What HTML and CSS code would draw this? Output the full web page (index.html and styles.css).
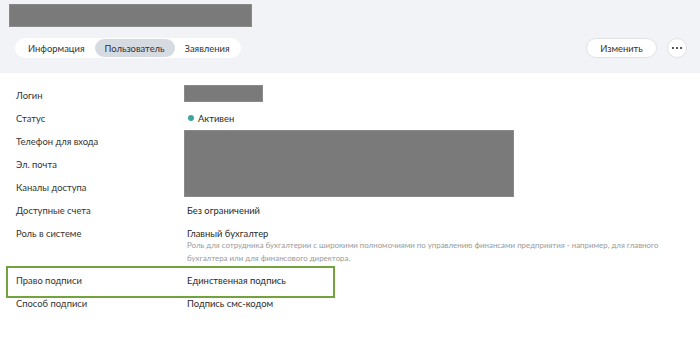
FILE: index.html
```html
<!DOCTYPE html>
<html lang="ru">
<head>
<meta charset="utf-8">
<link rel="stylesheet" href="styles.css">
</head>
<body>
<header class="head">
  <div class="title-mask"></div>
  <div class="toolbar">
    <nav class="tabs">
      <span class="tab">Информация</span>
      <span class="tab active">Пользователь</span>
      <span class="tab">Заявления</span>
    </nav>
    <div class="actions">
      <button class="btn">Изменить</button>
      <button class="more"><span></span><span></span><span></span></button>
    </div>
  </div>
</header>
<main class="details">
  <div class="row">
    <div class="label">Логин</div>
    <div class="value"><div class="mask mask-login"></div></div>
  </div>
  <div class="row">
    <div class="label">Статус</div>
    <div class="value"><span class="dot"></span>Активен</div>
  </div>
  <div class="group">
    <div class="labels">
      <div class="label row-line">Телефон для входа</div>
      <div class="label row-line">Эл. почта</div>
      <div class="label row-line">Каналы доступа</div>
    </div>
    <div class="value"><div class="mask mask-big"></div></div>
  </div>
  <div class="row">
    <div class="label">Доступные счета</div>
    <div class="value">Без ограничений</div>
  </div>
  <div class="row">
    <div class="label">Роль в системе</div>
    <div class="value">Главный бухгалтер
      <p class="desc">Роль для сотрудника бухгалтерии с широкими полномочиями по управлению финансами предприятия - например, для главного бухгалтера или для финансового директора.</p>
    </div>
  </div>
  <div class="row highlighted">
    <div class="label">Право подписи</div>
    <div class="value">Единственная подпись</div>
  </div>
  <div class="row">
    <div class="label">Способ подписи</div>
    <div class="value">Подпись смс-кодом</div>
  </div>
</main>
</body>
</html>
```

FILE: styles.css
```css
* { box-sizing: border-box; }
body {
  margin: 0;
  font-family: "Lato", "Noto Sans", sans-serif;
  font-size: 9.4px;
  color: #2a2a2a;
  background: #fff;
}
.head {
  background: #f2f3f6;
  height: 73px;
  padding: 4px 13px 0 9px;
}
.title-mask {
  width: 243px;
  height: 23px;
  background: #7a7a7a;
  border: 1px solid #8a8a8a;
}
.toolbar {
  display: flex;
  justify-content: space-between;
  align-items: center;
  margin-top: 11px;
  padding-left: 6px;
}
.tabs {
  display: flex;
  background: #fff;
  border-radius: 10px;
  padding: 1px;
  height: 20px;
}
.tab {
  display: flex;
  align-items: center;
  padding: 0 10px;
  border-radius: 9px;
  height: 18px;
  color: #333;
}
.tab:first-child { padding-left: 12px; }
.tab.active { background: #d6dbe2; }
.actions { display: flex; gap: 10px; align-items: center; }
.btn {
  font: inherit;
  color: #333;
  width: 71px;
  height: 20px;
  border: 1px solid #dfe2e7;
  border-radius: 10px;
  background: #fff;
  padding: 0;
}
.more {
  width: 20px;
  height: 20px;
  border-radius: 50%;
  border: 1px solid #dfe2e7;
  background: #fff;
  display: flex;
  align-items: center;
  justify-content: center;
  gap: 1.5px;
  padding: 0;
}
.more span {
  width: 2.5px;
  height: 2.5px;
  border-radius: 50%;
  background: #222;
}
.details { padding-top: 11px; }
.row, .group {
  display: flex;
  padding-left: 16px;
  position: relative;
}
.row { padding-top: 4px; padding-bottom: 4px; line-height: 15px; }
.label { width: 171px; flex-shrink: 0; color: #333; }
.row-line { line-height: 15px; padding: 4px 0; }
.value { flex: 1; padding-right: 20px; }
.mask { background: #7a7a7a; border: 1px solid #8a8a8a; margin-left: -3px; }
.mask-login { width: 79px; height: 17px; margin-top: -3px; }
.mask-big { width: 330px; height: 67px; margin-top: 0; }
.dot {
  display: inline-block;
  width: 6px;
  height: 6px;
  border-radius: 50%;
  background: #3ea79c;
  margin: 0 4px 1px 1px;
}
.desc {
  margin: -2px 0 0;
  font-size: 7.9px;
  line-height: 13px;
  color: #9a9a9a;
  max-width: 490px;
}
.highlighted::after {
  content: "";
  position: absolute;
  left: 6px;
  top: -3px;
  width: 325px;
  height: 28px;
  border: 2px solid #73a33d;
}
```
